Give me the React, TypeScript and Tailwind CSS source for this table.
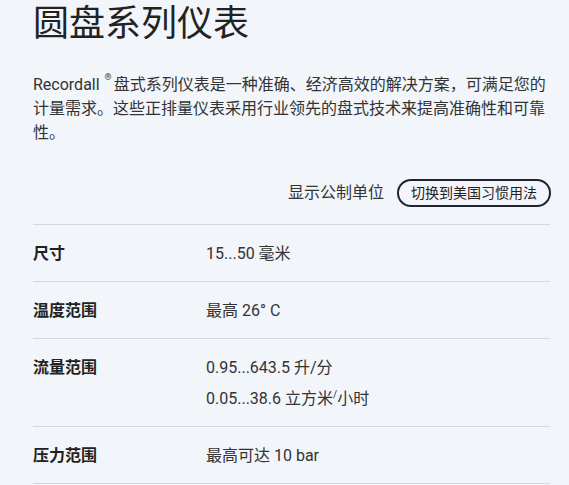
import React from 'react';

const specs: { label: string; values: React.ReactNode[] }[] = [
  { label: '尺寸', values: ['15...50 毫米'] },
  { label: '温度范围', values: ['最高 26° C'] },
  {
    label: '流量范围',
    values: [
      '0.95...643.5 升/分',
      <>
        0.05...38.6 立方米<sup className="text-[10px] relative -top-[6px]">/</sup>小时
      </>,
    ],
  },
  { label: '压力范围', values: ['最高可达 10 bar'] },
];

export default function App() {
  return (
    <div
      className="min-h-[485px] bg-[#f2f5fa] text-[#2b2b2b] pl-[33px] pr-[18px]"
      style={{ fontFamily: 'Roboto, "Noto Sans CJK SC", sans-serif' }}
    >
      <h1 className="text-[36px] leading-[48px] text-[#222]">圆盘系列仪表</h1>

      <p className="mt-[25px] text-[16px] leading-[24px] text-[#333]">
        Recordall <sup className="text-[9px] relative -top-[10px] ml-[1px] mr-[2px]">®</sup>盘式系列仪表是一种准确、经济高效的解决方案，可满足您的计量需求。这些正排量仪表采用行业领先的盘式技术来提高准确性和可靠性。
      </p>

      <div className="mt-[34px] flex items-center justify-end gap-[13px]">
        <span className="text-[16px] text-[#333]">显示公制单位</span>
        <button className="h-[28px] px-[12px] rounded-full border-2 border-[#1f2430] text-[14px] text-[#222] leading-none">
          切换到美国习惯用法
        </button>
      </div>

      <div className="mt-[17px] mr-[1px] border-t border-[#d5d9df]">
        {specs.map((s) => (
          <div key={s.label} className="flex pt-[16px] pb-[15px] border-b border-[#d5d9df]">
            <div className="w-[173px] shrink-0 font-bold text-[16px] leading-[25px] text-[#222]">{s.label}</div>
            <div className="flex flex-col gap-[6px] text-[16px] leading-[25px] text-[#333]">
              {s.values.map((v, i) => (
                <div key={i}>{v}</div>
              ))}
            </div>
          </div>
        ))}
      </div>
    </div>
  );
}
